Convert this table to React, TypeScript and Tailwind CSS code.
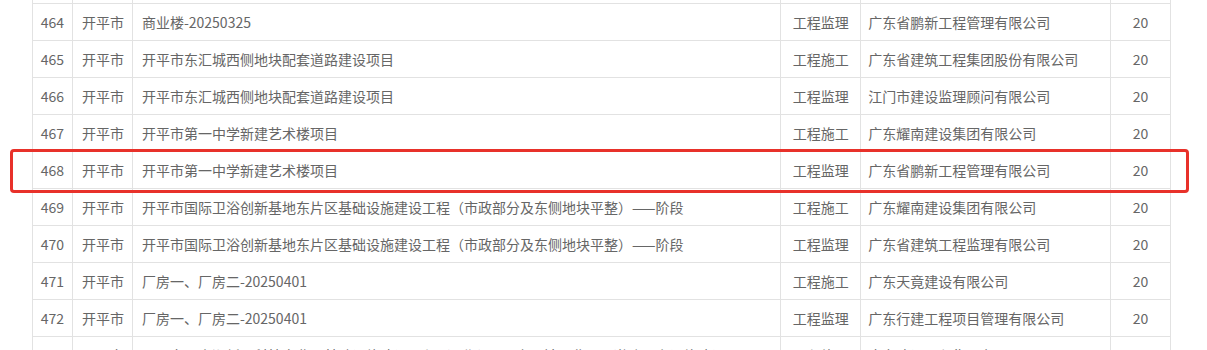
import React from "react";

type Row = { no: string; city: string; name: string; type: string; company: string; score: string };

const rows: Row[] = [
  { no: "464", city: "开平市", name: "商业楼-20250325", type: "工程监理", company: "广东省鹏新工程管理有限公司", score: "20" },
  { no: "465", city: "开平市", name: "开平市东汇城西侧地块配套道路建设项目", type: "工程施工", company: "广东省建筑工程集团股份有限公司", score: "20" },
  { no: "466", city: "开平市", name: "开平市东汇城西侧地块配套道路建设项目", type: "工程监理", company: "江门市建设监理顾问有限公司", score: "20" },
  { no: "467", city: "开平市", name: "开平市第一中学新建艺术楼项目", type: "工程施工", company: "广东耀南建设集团有限公司", score: "20" },
  { no: "468", city: "开平市", name: "开平市第一中学新建艺术楼项目", type: "工程监理", company: "广东省鹏新工程管理有限公司", score: "20" },
  { no: "469", city: "开平市", name: "开平市国际卫浴创新基地东片区基础设施建设工程（市政部分及东侧地块平整）——阶段", type: "工程施工", company: "广东耀南建设集团有限公司", score: "20" },
  { no: "470", city: "开平市", name: "开平市国际卫浴创新基地东片区基础设施建设工程（市政部分及东侧地块平整）——阶段", type: "工程监理", company: "广东省建筑工程监理有限公司", score: "20" },
  { no: "471", city: "开平市", name: "厂房一、厂房二-20250401", type: "工程施工", company: "广东天竟建设有限公司", score: "20" },
  { no: "472", city: "开平市", name: "厂房一、厂房二-20250401", type: "工程监理", company: "广东行建工程项目管理有限公司", score: "20" },
  { no: "473", city: "开平市", name: "开平市翠山湖新区科技产业园基础设施建设工程（二期）——水口镇工业园区道路配套设施建设项目", type: "工程施工", company: "广东建设工程集团有限公司", score: "20" },
];

const cellBase = "box-border border-r border-[#e2e2e2] flex items-center overflow-hidden whitespace-nowrap";

function TableRow({ r }: { r: Row }) {
  return (
    <div className="flex h-[37px] border-b border-[#e2e2e2] box-border">
      <div className={`${cellBase} w-[40px] justify-center`}>{r.no}</div>
      <div className={`${cellBase} w-[60px] pl-[9px]`}>{r.city}</div>
      <div className={`${cellBase} w-[649px] pl-[9px]`}>{r.name}</div>
      <div className={`${cellBase} w-[80px] justify-center`}>{r.type}</div>
      <div className={`${cellBase} w-[250px] pl-[7px]`}>{r.company}</div>
      <div className={`${cellBase} w-[60px] justify-center`}>{r.score}</div>
    </div>
  );
}

export default function App() {
  return (
    <div
      className="relative w-[1207px] h-[350px] overflow-hidden bg-white text-[14px] text-[#666666] leading-none"
      style={{ fontFamily: '"Microsoft YaHei", "Noto Sans CJK SC", "Noto Sans", sans-serif' }}
    >
      <div className="ml-[32px] w-[1139px] border-l border-[#e2e2e2] box-border">
        <div className="flex h-[4px] border-b border-[#e2e2e2] box-border">
          <div className={`${cellBase} w-[40px]`} />
          <div className={`${cellBase} w-[60px]`} />
          <div className={`${cellBase} w-[649px]`} />
          <div className={`${cellBase} w-[80px]`} />
          <div className={`${cellBase} w-[250px]`} />
          <div className={`${cellBase} w-[60px]`} />
        </div>
        {rows.map((r) => (
          <TableRow key={r.no} r={r} />
        ))}
      </div>
      <div className="absolute left-[10px] top-[149px] w-[1179px] h-[44px] border-[3px] border-[#e8312a] rounded-[4px] pointer-events-none" />
    </div>
  );
}
